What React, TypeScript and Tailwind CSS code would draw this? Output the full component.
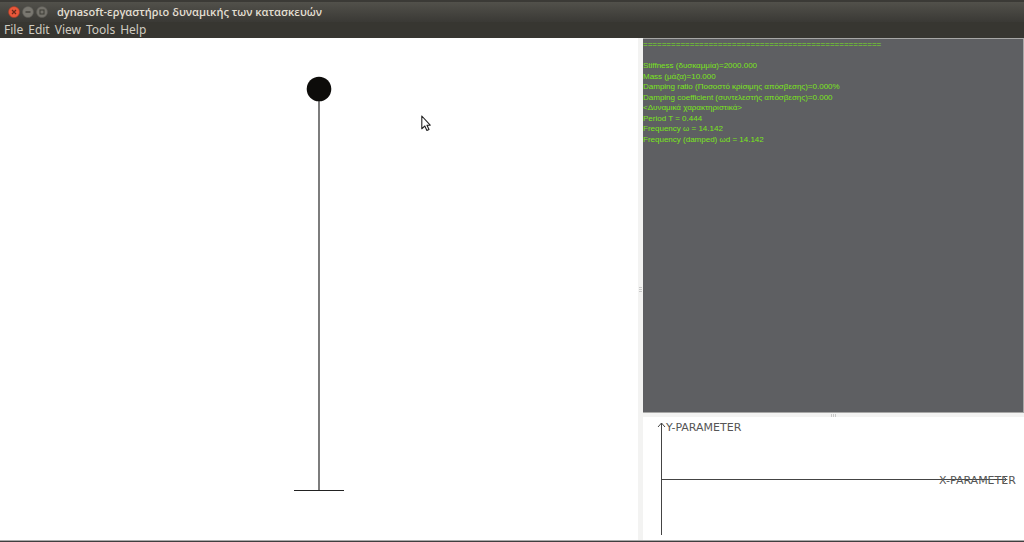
const menus = ["File", "Edit", "View", "Tools", "Help"];

const report = [
  "=".repeat(51),
  "",
  "Stiffness (δυσκαμμία)=2000.000",
  "Mass (μάζα)=10.000",
  "Damping ratio (Ποσοστό κρίσιμης απόσβεσης)=0.000%",
  "Damping coefficient (συντελεστής απόσβεσης)=0.000",
  "<Δυναμικά χαρακτηριστικά>",
  "Period T = 0.444",
  "Frequency ω = 14.142",
  "Frequency (damped) ωd = 14.142",
];

function WindowButtons() {
  return (
    <div className="flex gap-0.5">
      <button type="button" aria-label="Close" className="size-3">
        <svg viewBox="0 0 12 12" className="size-3">
          <circle cx="6" cy="6" r="5.5" fill="#e9573a" stroke="#a43c25" strokeWidth=".6" />
          <path d="M4 4l4 4M8 4l-4 4" stroke="#66291b" strokeWidth="1.2" />
        </svg>
      </button>
      <button type="button" aria-label="Minimize" className="size-3">
        <svg viewBox="0 0 12 12" className="size-3">
          <circle cx="6" cy="6" r="5.5" fill="#797770" stroke="#5c5b55" strokeWidth=".6" />
          <path d="M3.5 6h5" stroke="#3d3c37" strokeWidth="1.3" />
        </svg>
      </button>
      <button type="button" aria-label="Maximize" className="size-3">
        <svg viewBox="0 0 12 12" className="size-3">
          <circle cx="6" cy="6" r="5.5" fill="#74726b" stroke="#5c5b55" strokeWidth=".6" />
          <rect x="4" y="4" width="4" height="4" fill="none" stroke="#3d3c37" />
        </svg>
      </button>
    </div>
  );
}

function Oscillator() {
  return (
    <svg viewBox="0 0 638 502" className="size-full" aria-label="Single mass oscillator">
      <path d="M319 60V452" stroke="#111" strokeWidth="1.1" />
      <path d="M294 452.5H344" stroke="#222" shapeRendering="crispEdges" />
      <circle cx="319" cy="51" r="12.3" fill="#0d0c0a" />
      <path
        d="M421.8 78v12.8l3-2.8 2.1 4.4 2.1-1-2-4.2h3.2z"
        fill="#fff"
        stroke="#222"
        strokeWidth="1.1"
        strokeLinejoin="round"
      />
    </svg>
  );
}

function Plot() {
  return (
    <svg
      viewBox="0 0 381 123"
      className="size-full font-['DejaVu_Sans',sans-serif] text-[11px]"
      aria-label="Parameter plot"
    >
      <g stroke="#444" fill="none">
        <path d="M18.5 6V118" shapeRendering="crispEdges" />
        <path d="M18.5 62.5H363" shapeRendering="crispEdges" />
        <path d="M15 10l3.5-4 3.5 4M360 59.5l3.5 3-3.5 3" />
      </g>
      <text x="23" y="14" fill="#555">Y-PARAMETER</text>
      <text x="296" y="67" fill="#555">X-PARAMETER</text>
    </svg>
  );
}

export default function App() {
  return (
    <div className="flex h-screen flex-col overflow-hidden bg-white font-['Noto_Sans','DejaVu_Sans',sans-serif]">
      <header className="flex h-[22px] shrink-0 items-center gap-[9px] border-t-2 border-[#3b3a36] bg-linear-to-b from-[#52514b] to-[#3a3935] pl-2">
        <WindowButtons />
        <h1 className="font-['Open_Sans','Noto_Sans',sans-serif] text-[11px] leading-4 font-semibold text-[#e3dfd2]">
          dynasoft-εργαστήριο δυναμικής των κατασκευών
        </h1>
      </header>
      <nav className="flex h-4 shrink-0 items-center gap-[5px] bg-[#373631] pl-1 text-[12px] leading-4 text-[#cfcbc0]">
        {menus.map((name) => (
          <button key={name} type="button">{name}</button>
        ))}
      </nav>
      <main className="grid min-h-0 flex-1 grid-cols-[638fr_5px_381fr]">
        <section className="min-h-0 min-w-0">
          <Oscillator />
        </section>
        <div className="flex flex-col items-center justify-center gap-px bg-[#f3f3f2]">
          <i className="h-px w-[3px] bg-[#c9c9c9]" />
          <i className="h-px w-[3px] bg-[#c9c9c9]" />
          <i className="h-px w-[3px] bg-[#c9c9c9]" />
        </div>
        <div className="grid min-h-0 min-w-0 grid-rows-[375fr_4px_123fr]">
          <section className="min-h-0 border-t border-r border-b border-[#a7a7a6] bg-[#5e5f62] pt-px font-['Liberation_Sans',sans-serif] text-[8px] text-[#7ae51b]">
            <div className="grid h-[105px] auto-rows-fr items-center">
              {report.map((line, i) => (
                <p key={i} className="h-2.5 leading-[10px] whitespace-nowrap">{line}</p>
              ))}
            </div>
          </section>
          <div className="flex items-center justify-center gap-px bg-[#f3f3f2]">
            <i className="h-[3px] w-px bg-[#c9c9c9]" />
            <i className="h-[3px] w-px bg-[#c9c9c9]" />
            <i className="h-[3px] w-px bg-[#c9c9c9]" />
          </div>
          <section className="min-h-0 min-w-0">
            <Plot />
          </section>
        </div>
      </main>
      <footer className="h-0.5 shrink-0 border-t border-[#aaa] bg-[#3f3f3f]" />
    </div>
  );
}
